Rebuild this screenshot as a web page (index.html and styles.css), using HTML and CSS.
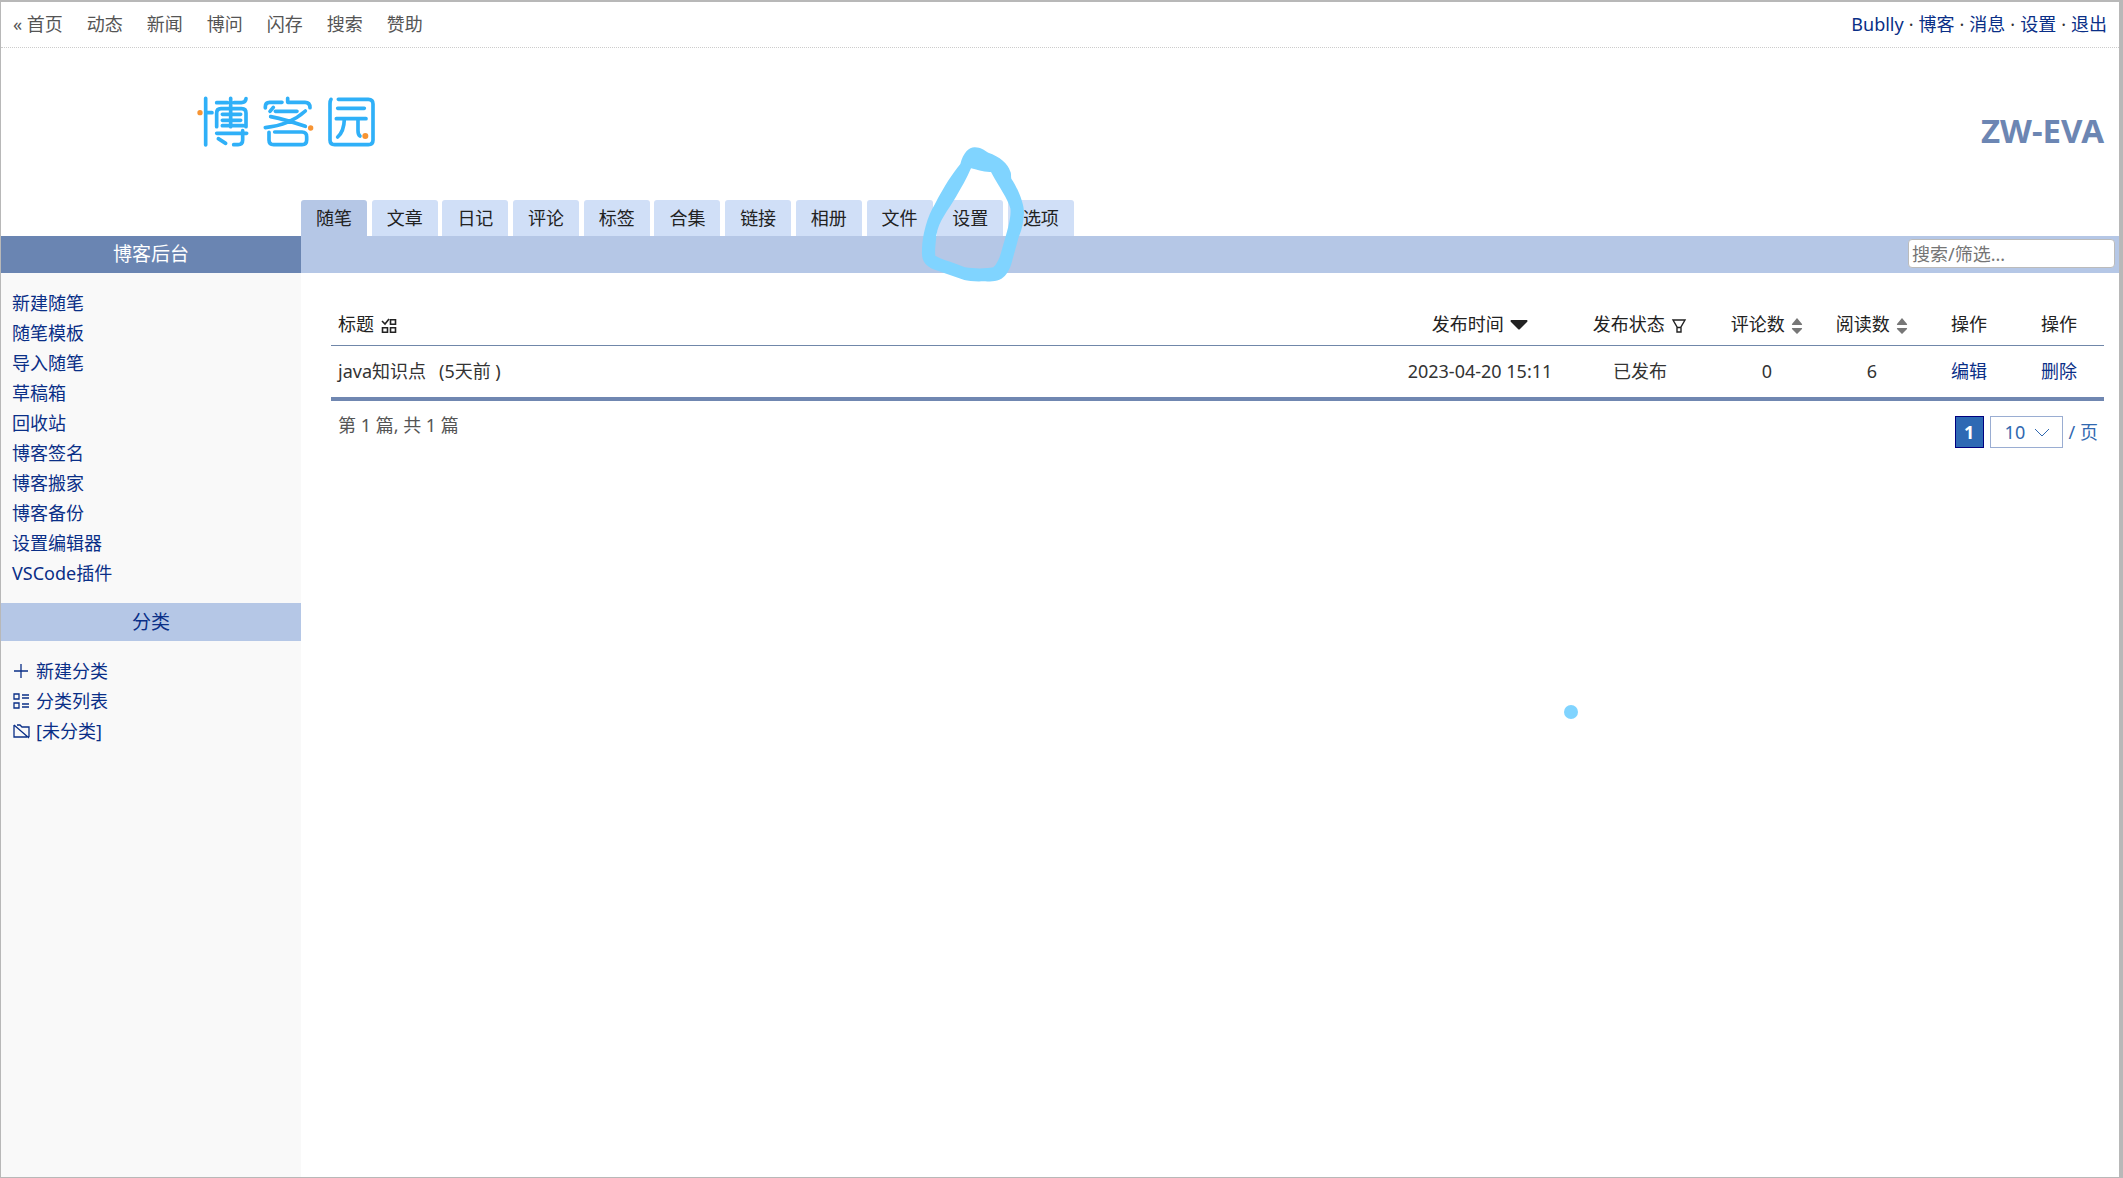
FILE: index.html
```html
<!DOCTYPE html>
<html lang="zh-CN">
<head>
<meta charset="utf-8">
<title>随笔 - 博客后台 - 博客园</title>
<link rel="stylesheet" href="styles.css">
</head>
<body>
<div class="page">
  <nav class="topbar">
    <div class="topbar-links">
      <a href="#">« 首页</a><a href="#">动态</a><a href="#">新闻</a><a href="#">博问</a><a href="#">闪存</a><a href="#">搜索</a><a href="#">赞助</a>
    </div>
    <div class="topbar-user">
      <a href="#">Bublly</a><span>·</span><a href="#">博客</a><span>·</span><a href="#">消息</a><span>·</span><a href="#">设置</a><span>·</span><a href="#">退出</a>
    </div>
  </nav>

  <header class="header">
    <a class="logo" href="#" aria-label="博客园">
      <svg viewBox="585 285 546 162" width="182" height="54">
        <g fill="none" stroke="#2fb0f8" stroke-width="11" stroke-linecap="round" stroke-linejoin="round">
          <path d="M617 295V435M617 338H636M650 308H682M692 295V380M702 308H724Q737 308 738 296M650 380V339Q650 326 663 326H725Q738 326 738 339V380M667 343H722M667 361H722M667 377H730M650 400H740M728 392V420Q728 434 714 434H701M655 416L677 430"/>
          <path d="M863 295V307M796 324V320Q796 307 809 307H846M863 307H915Q930 307 930 323M820 322L810 334M826 334H891M916 333Q870 375 796 383M812 350Q860 360 916 379M824 396H906Q920 396 920 410V420Q920 434 906 434H821Q807 434 807 420V397"/>
          <path d="M1015 298H1105Q1119 298 1119 312V420Q1119 434 1105 434H1004Q990 434 990 420V312Q990 302 993 298M1013 325H1093M1009 356H1098M1033 358Q1032 394 1013 411M1074 358V392Q1074 404 1080 408"/>
        </g>
        <g fill="#f79433"><circle cx="600" cy="338" r="8"/><circle cx="932" cy="384" r="8"/><circle cx="1096" cy="408" r="9"/></g>
      </svg>
    </a>
    <h1 class="blog-title">ZW-EVA</h1>
  </header>

  <nav class="tabs">
    <a class="tab tab-active" href="#">随笔</a>
    <a class="tab" href="#">文章</a>
    <a class="tab" href="#">日记</a>
    <a class="tab" href="#">评论</a>
    <a class="tab" href="#">标签</a>
    <a class="tab" href="#">合集</a>
    <a class="tab" href="#">链接</a>
    <a class="tab" href="#">相册</a>
    <a class="tab" href="#">文件</a>
    <a class="tab" href="#">设置</a>
    <a class="tab" href="#">选项</a>
  </nav>

  <div class="columns">
    <aside class="sidebar">
      <h2 class="side-head side-head-main">博客后台</h2>
      <ul class="side-list">
        <li><a href="#">新建随笔</a></li>
        <li><a href="#">随笔模板</a></li>
        <li><a href="#">导入随笔</a></li>
        <li><a href="#">草稿箱</a></li>
        <li><a href="#">回收站</a></li>
        <li><a href="#">博客签名</a></li>
        <li><a href="#">博客搬家</a></li>
        <li><a href="#">博客备份</a></li>
        <li><a href="#">设置编辑器</a></li>
        <li><a href="#">VSCode插件</a></li>
      </ul>
      <h2 class="side-head">分类</h2>
      <ul class="side-list">
        <li><a class="with-icon" href="#"><svg viewBox="0 0 18 18"><path d="M9 2v14M2 9h14"/></svg>新建分类</a></li>
        <li><a class="with-icon" href="#"><svg viewBox="0 0 18 18"><path d="M2 2h5v5h-5zM2 11h5v5h-5zM10 3h7M10 6h7M10 12h7M10 15h7"/></svg>分类列表</a></li>
        <li><a class="with-icon" href="#"><svg viewBox="0 0 18 18"><path d="M5 3h3l2 2h7v10M15 15H2V3M2 3l15 13"/></svg>[未分类]</a></li>
      </ul>
    </aside>

    <main class="main">
      <div class="filter-bar">
        <input class="search" type="text" placeholder="搜索/筛选..." aria-label="搜索/筛选">
      </div>
      <section class="content">
        <table class="posts">
          <colgroup><col><col class="c-time"><col class="c-state"><col class="c-comments"><col class="c-views"><col class="c-action"><col class="c-action"></colgroup>
          <thead>
            <tr>
              <th class="left">标题 <button class="icon-btn" type="button" aria-label="多选"><svg viewBox="0 0 16 16" width="16" height="16"><path fill="none" stroke="currentColor" stroke-width="1.6" d="M1 3l3 3 4-5M9.5 1.8h5v4.5h-5zM1.5 9.7h5v4.5h-5zM9.5 9.7h5v4.5h-5z"/></svg></button></th>
              <th>发布时间 <button class="icon-btn" type="button" aria-label="按时间排序"><svg viewBox="0 0 18 16" width="18" height="16"><path fill="#222" d="M1 2h16q1 1 0 2l-7 7q-1 1-2 0L1 4q-1-1 0-2z"/></svg></button></th>
              <th>发布状态 <button class="icon-btn" type="button" aria-label="筛选状态"><svg viewBox="0 0 16 16" width="16" height="16"><path fill="none" stroke="currentColor" stroke-width="1.4" d="M2 2h12l-4 7v5h-4v-5zM6 9.5h4"/></svg></button></th>
              <th>评论数 <button class="icon-btn" type="button" aria-label="按评论数排序"><svg viewBox="0 0 12 16" width="12" height="16"><path fill="#777" d="M6 0l5 6q.5 1-.5 1h-9q-1 0-.5-1zM6 16l5-5q.5-1-.5-1h-9q-1 0-.5 1z"/></svg></button></th>
              <th>阅读数 <button class="icon-btn" type="button" aria-label="按阅读数排序"><svg viewBox="0 0 12 16" width="12" height="16"><path fill="#777" d="M6 0l5 6q.5 1-.5 1h-9q-1 0-.5-1zM6 16l5-5q.5-1-.5-1h-9q-1 0-.5 1z"/></svg></button></th>
              <th>操作</th>
              <th>操作</th>
            </tr>
          </thead>
          <tbody>
            <tr>
              <td class="left"><a class="post-title" href="#">java知识点</a><span class="post-age">(5天前 )</span></td>
              <td>2023-04-20 15:11</td>
              <td>已发布</td>
              <td>0</td>
              <td>6</td>
              <td><a href="#">编辑</a></td>
              <td><a href="#">删除</a></td>
            </tr>
          </tbody>
        </table>
        <div class="table-foot">
          <div class="summary">第 1 篇, 共 1 篇</div>
          <div class="pager">
            <button class="page-current" type="button">1</button>
            <div class="page-size">
              <select id="page-size"><option>10</option><option>20</option></select>
              <svg class="chevron" viewBox="0 0 16 10" width="16" height="10"><path fill="none" stroke="currentColor" d="M1 1l7 7 7-7"/></svg>
            </div>
            <label for="page-size">/ 页</label>
          </div>
        </div>
      </section>
    </main>
  </div>

  <svg class="pen-ring" viewBox="0 0 312 414" width="104" height="138" aria-hidden="true">
    <path fill="#80d4ff" fill-rule="evenodd" d="M121 60C130 25 148 9 165 10C182 10 192 19 205 26C238 36 266 62 270 80C275 88 272 98 274 104C295 135 312 180 312 205C310 245 302 265 296 280L278 345C272 370 265 385 255 395C240 412 215 413 190 412C165 413 145 411 133 408L40 376C15 364 4 350 6 320C5 280 22 215 45 180C70 130 100 85 121 60ZM153 73C140 105 124 130 108 158C84 200 55 230 49 275C47 300 44 320 46 335C65 347 110 358 135 370C165 375 200 374 220 370C240 350 244 320 252 295C260 265 275 220 271 193C262 160 240 135 213 84C190 85 170 77 153 73Z"/>
  </svg>
  <svg class="pen-dot" viewBox="0 0 14 14" width="14" height="14" aria-hidden="true"><circle cx="7" cy="7" r="7" fill="#80d4ff"/></svg>
</div>
</body>
</html>
```
FILE: styles.css
```css
* {
  box-sizing: border-box;
}

body {
  margin: 0;
  font: 18px/30px "Noto Sans", "Noto Sans CJK SC", sans-serif;
  color: #333;
}

a {
  color: #0a2f87;
  text-decoration: none;
}

.page {
  position: relative;
  display: flex;
  flex-direction: column;
  min-height: 100vh;
  border: solid #b8b8b8;
  border-width: 2px 4px 1px 1px;
  background: #fff;
}

.topbar {
  display: flex;
  justify-content: space-between;
  padding: 7px 12px 8px;
  border-bottom: 1px dotted #ccc;
}

.topbar-links {
  display: flex;
  gap: 24px;
}

.topbar-links a {
  color: #555;
}

.topbar-user {
  display: flex;
  gap: 5px;
}

.header {
  display: flex;
  justify-content: space-between;
  align-items: flex-start;
  height: 152px;
  padding: 47px 15px 0 194px;
}

.logo svg {
  display: block;
}

.blog-title {
  margin: 14px 0 0;
  font-size: 33px;
  line-height: 44px;
  color: #6c86b3;
}

.tabs {
  height: 36px;
  padding-left: 300px;
}

.tab {
  display: inline-block;
  height: 36px;
  padding: 0 15px;
  line-height: 36px;
  vertical-align: top;
  border-radius: 3px 3px 0 0;
  background: #d0dff7;
  color: #222;
}

.tab-active {
  background: #b5c7e6;
}

.columns {
  display: flex;
  flex: 1;
}

.sidebar {
  width: 300px;
  background: #f9f9f9;
}

.side-head {
  margin: 0;
  font-size: 19px;
  font-weight: 400;
  line-height: 38px;
  text-align: center;
  background: #b5c7e6;
  color: #0a2f87;
}

.side-head-main {
  line-height: 37px;
  background: #6a85b2;
  color: #fff;
}

.side-list {
  margin: 0;
  padding: 15px 11px;
  list-style: none;
}

.with-icon {
  display: flex;
  align-items: center;
  gap: 6px;
}

.with-icon svg {
  width: 18px;
  height: 18px;
  fill: none;
  stroke: currentColor;
  stroke-width: 1.3;
}

.main {
  flex: 1;
}

.filter-bar {
  display: flex;
  justify-content: flex-end;
  height: 37px;
  padding: 3px 4px;
  background: #b5c7e6;
}

.search {
  width: 207px;
  height: 29px;
  padding: 0 3px;
  border: 1px solid #bbb;
  border-radius: 4px;
  font: inherit;
  line-height: 27px;
}

.search::placeholder {
  color: #757575;
}

.content {
  padding: 30px 15px 0 30px;
}

.posts {
  width: 100%;
  table-layout: fixed;
  border-collapse: separate;
  border-spacing: 0;
  border-bottom: 4px solid #7087b1;
}

.c-time { width: 172px; }
.c-state { width: 148px; }
.c-comments { width: 106px; }
.c-views { width: 104px; }
.c-action { width: 90px; }

.posts th,
.posts td {
  padding: 0;
  text-align: center;
  white-space: nowrap;
}

.posts th {
  height: 43px;
  border-bottom: 1px solid #7087a9;
  font-weight: 400;
  color: #222;
}

.posts td {
  height: 51px;
  padding-bottom: 2px;
}

.posts .left {
  padding-left: 7px;
  text-align: left;
}

.post-title {
  color: #333;
}

.post-age {
  margin-left: 13px;
}

.icon-btn {
  margin-left: 2px;
  padding: 0;
  border: 0;
  background: none;
  color: #222;
  vertical-align: middle;
}

.icon-btn svg {
  display: block;
}

.table-foot {
  display: flex;
  justify-content: space-between;
  padding: 9px 6px 0 7px;
}

.summary {
  color: #555;
}

.pager {
  display: flex;
  align-items: center;
  gap: 6px;
  padding-top: 6px;
  color: #3068b0;
}

.page-current {
  width: 29px;
  height: 32px;
  padding: 0;
  border: 1px solid #00007f;
  background: #2e69b4;
  color: #fff;
  font: inherit;
  font-weight: 700;
  line-height: 30px;
}

.page-size {
  position: relative;
}

.page-size select {
  display: block;
  width: 73px;
  height: 32px;
  padding: 0 14px;
  appearance: none;
  border: 1px solid #9aadd2;
  border-radius: 0;
  background: #fff;
  color: inherit;
  font: inherit;
}

.chevron {
  position: absolute;
  top: 12px;
  right: 13px;
  pointer-events: none;
}

.pen-ring {
  position: absolute;
  left: 919px;
  top: 142px;
}

.pen-dot {
  position: absolute;
  left: 1563px;
  top: 703px;
}
```
